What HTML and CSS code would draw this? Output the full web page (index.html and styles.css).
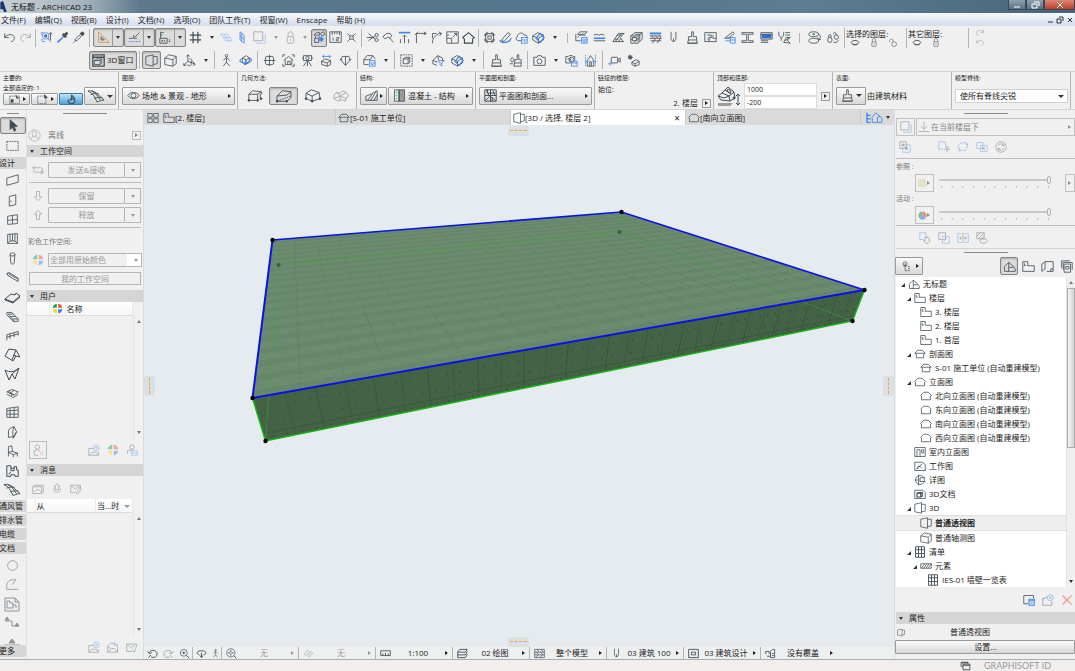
FILE: index.html
```html
<!DOCTYPE html>
<html lang="zh-CN">
<head>
    <meta charset="UTF-8">
    <meta name="viewport" content="width=device-width, initial-scale=1.0">
    <title>无标题 - ARCHICAD 23</title>
    <link rel="stylesheet" href="styles.css">
</head>
<body>
<svg class="sprite" aria-hidden="true">
    <!-- toolbar -->
    <symbol id="undo" viewBox="0 0 16 16"><path d="M2 3v5h5M2 8c3-5 12-5 12 1 0 2-2 4-4 4"/></symbol>
    <symbol id="redo" viewBox="0 0 16 16"><path d="M14 3v5H9M14 8C11 3 2 3 2 9c0 2 2 4 4 4"/></symbol>
    <symbol id="find" viewBox="0 0 16 16"><path class="b" d="M1 2h3M1 4h2M1 11h3M3 13h3"/><circle class="b" cx="7" cy="6" r="4"/><circle class="bf" cx="7" cy="6" r="2"/><path d="M10 9l3 4M13 2v9M11 4l2-2 2 2"/></symbol>
    <symbol id="pipette" viewBox="0 0 16 16"><path class="b" stroke-width="2" d="M2 14l6-6"/><path class="f" d="M8 6l2 2 1-1 1 1 1-1-1-1 2-2c1-2-1-3-2-2l-2 2-1-1-1 1 1 1z"/></symbol>
    <symbol id="inject" viewBox="0 0 16 16"><path class="b" d="M1 15l4-4"/><path d="M4 10l5-5 2 2-5 5H4z"/><path class="f" d="M10 3l3 3M10 3l3-2 2 2-2 3z"/></symbol>
    <symbol id="triangle" viewBox="0 0 16 16"><path class="o" d="M2 1v13h13z"/><path d="M5 7v4h4z"/></symbol>
    <symbol id="snap" viewBox="0 0 16 16"><path d="M1 9h5M8 8l6-6M7 5v4h4"/><path class="b" stroke-dasharray="2 1" d="M1 13h14"/></symbol>
    <symbol id="coord" viewBox="0 0 16 16"><path d="M2 1v8M2 2h4M2 5h2M1 9h9v6H1zM3 11l2 2M5 11l-2 2M7 11v2M12 11h2M12 13h2"/></symbol>
    <symbol id="hash" viewBox="0 0 16 16"><path stroke-width="1.5" d="M5 1v14M11 1v14M1 5h14M1 11h14"/></symbol>
    <symbol id="plane" viewBox="0 0 16 16"><path class="b" d="M1 4h8l6 8H7zM4 8h8M5 4l6 8"/></symbol>
    <symbol id="wallplane" viewBox="0 0 16 16"><path class="b" d="M5 1l5 4v10l-5-4zM5 6l5 4M7 3v10"/></symbol>
    <symbol id="layers" viewBox="0 0 16 16"><path d="M1 1h11v11H1z"/><path class="b" d="M4 15h11V4"/></symbol>
    <symbol id="lock" viewBox="0 0 16 16"><rect x="4" y="7" width="8" height="8" rx="2"/><path d="M5 7V4c0-4 6-4 6 0v3M8 10v2"/></symbol>
    <symbol id="suspend" viewBox="0 0 16 16"><path d="M1 5l3-3h4v3H1zM9 3l4-2 2 3-4 2zM2 9h5v5H2zM3 6v3M7 6l2 3"/><circle class="bf" cx="10" cy="10" r="2"/><path class="b" d="M10 6v8M6 10h8M7 7l6 6M13 7l-6 6"/></symbol>
    <symbol id="ruler" viewBox="0 0 16 16"><path d="M1 1h14v13H1zM4 1v4M7 1v3M10 1v3M13 1v4M5 8v4M9 8h3v2H9v2h3"/></symbol>
    <symbol id="cross" viewBox="0 0 16 16"><path d="M3 3l3 3M13 3l-3 3M3 13l3-3M13 13l-3-3M6 6h4v4H6z"/></symbol>
    <symbol id="trim" viewBox="0 0 16 16"><circle cx="13" cy="5" r="2"/><circle cx="13" cy="11" r="2"/><path d="M11 6L3 12M11 10L3 3M1 8h9"/></symbol>
    <symbol id="hammer" viewBox="0 0 16 16"><path d="M1 7l5-4h4l2 3-3 3-2-2-3 3zM9 8l5 6"/></symbol>
    <symbol id="align" viewBox="0 0 16 16"><path class="b" stroke-width="2" d="M1 2h14"/><path d="M8 5v10M6 7l2-2 2 2M3 10v5M13 10v5"/></symbol>
    <symbol id="corner" viewBox="0 0 16 16"><path d="M3 15V3h12M1 5l4-4M12 1l3 2-3 2"/></symbol>
    <symbol id="fillet" viewBox="0 0 16 16"><path d="M3 15C3 8 8 3 14 3M11 1l3 2-2 3M3 9V3h5"/></symbol>
    <symbol id="resize" viewBox="0 0 16 16"><path d="M1 1h14v14H1zM1 9h6v6M8 8l5-5M10 3h3v3M4 5H1"/></symbol>
    <symbol id="house" viewBox="0 0 16 16"><path stroke-width="1.4" d="M1 8l7-6 7 6-2 2v5H3v-5z"/></symbol>
    <symbol id="group" viewBox="0 0 16 16"><path d="M3 3h10v10H3zM6 6h4v4H6zM1 5h4V1M11 1v4h4M15 11h-4v4M5 15v-4H1"/></symbol>
    <symbol id="pencil" viewBox="0 0 16 16"><path class="b" stroke-width="1.5" d="M1 11c1 5 12 4 14-2"/><path d="M4 10l7-8 3 2-7 8-3 1z"/></symbol>
    <symbol id="cloud" viewBox="0 0 16 16"><path d="M8 12H4c-4-1-3-5-1-5 0-5 7-6 8-2 3-1 4 1 4 3"/><rect class="b" x="8" y="8" width="7" height="7"/><path class="b" d="M8 11h7M11 13h2"/></symbol>
    <symbol id="cube" viewBox="0 0 16 16"><path d="M1 6l6-4 7 3v6l-6 4-7-4zM1 6l7 3 6-4M8 9v6"/><path class="b" stroke-width="1.6" d="M5 9l5-6 5 5-5 6z"/></symbol>
    <symbol id="storyset" viewBox="0 0 16 16"><path d="M3 4l3-3h9l-3 3zM3 8l3-3h7M1 4v8h6"/><rect class="bl" x="8" y="8" width="7" height="7"/><path class="b" d="M8 8h7v7H8zM8 11h7M10 13h3"/></symbol>
    <symbol id="lines" viewBox="0 0 16 16"><path d="M1 5l3-1 3 1 3-1 4 1M1 12h14"/><path class="b" stroke-width="2" d="M1 9h14"/></symbol>
    <symbol id="hatch" viewBox="0 0 16 16"><path d="M1 13l7-10h7l-5 5 4 5zM4 13l8-10M8 13l3-4M3 10h5M6 5h6"/></symbol>
    <symbol id="block" viewBox="0 0 16 16"><path d="M1 6l5-4h9v8l-5 5H1zM1 6h9v8M10 6l5-4M3 8h5v4H3zM12 5v7M6 4h7M1 11l5-5M5 14l5-5"/></symbol>
    <symbol id="strata" viewBox="0 0 16 16"><path class="b" stroke-width="2.4" d="M1 3h14"/><path d="M1 6h14M1 9h14M2 12h13M3 6l3 3M8 6l3 3M13 6l2 3M4 15l4-6M10 15l4-6"/></symbol>
    <symbol id="modelfilter" viewBox="0 0 16 16"><path d="M1 2h14v12H1zM1 6h14M1 10h14M3 6l4 4M9 6l4 4M5 2l2 4M11 2l2 4M3 14l3-4M9 14l3-4"/></symbol>
    <symbol id="pen" viewBox="0 0 16 16"><path d="M5 1v8c0 5 6 5 6 0V1M8 9v4"/></symbol>
    <symbol id="brush" viewBox="0 0 16 16"><path d="M7 1h2v6h4v4H3V7h4zM3 11l-1 4h12l-1-4M2 15h12"/></symbol>
    <symbol id="profile" viewBox="0 0 16 16"><path d="M1 2h14v11H1zM4 5h5v3H6v5M11 5v4h4"/><path class="b" d="M4 10h4"/></symbol>
    <symbol id="edit" viewBox="0 0 16 16"><path class="b" d="M1 9h9M3 12h6"/><path d="M3 8l9-7 2 2-8 6z"/><path class="b" d="M9 8h6v7H9zM9 11h6"/></symbol>
    <symbol id="ibeam" viewBox="0 0 16 16"><path d="M1 2h14v2H9v8h6v2H1v-2h6V4H1z"/></symbol>
    <symbol id="sched" viewBox="0 0 16 16"><rect class="bf" x="2" y="4" width="12" height="5"/><path d="M1 2h14v8H1zM1 4h14M1 12h9M1 14h9"/></symbol>
    <symbol id="mep" viewBox="0 0 16 16"><path d="M1 1v4l3 4 3-4V1M4 9v3M9 2h6M9 5h6M7 14l3-6h5l-4 3 4 4zM9 12l5-4"/></symbol>
    <symbol id="eyeplus" viewBox="0 0 16 16"><ellipse cx="7" cy="4" rx="6" ry="3"/><ellipse cx="7" cy="12" rx="6" ry="3"/><circle cx="7" cy="4" r="1"/><path d="M12 3c4 2 4 5 1 8M12 8l1 3 3-1"/></symbol>
    <symbol id="locks" viewBox="0 0 16 16"><rect x="1" y="8" width="5" height="6" rx="2"/><path d="M2 8V6c0-2 3-2 3 0v2M8 4c0-3 3-3 3 0v1"/><rect x="9" y="5" width="5" height="5" rx="2"/><path d="M8 14h4l2-3"/></symbol>
    <symbol id="eye" viewBox="0 0 16 16"><path d="M1 8c3-5 11-5 14 0-3 5-11 5-14 0z"/><circle cx="8" cy="8" r="3"/></symbol>
    <symbol id="eyeshut" viewBox="0 0 16 16"><path stroke-width="1.6" d="M1 8c3-5 11-5 14 0-3 5-11 5-14 0z"/><path d="M3 11c3 2 7 2 10 0"/></symbol>
    <symbol id="unlock" viewBox="0 0 16 16"><rect x="6" y="7" width="8" height="8" rx="3"/><path d="M8 7V5c0-4-6-4-6 0v2"/></symbol>
    <!-- 3D toolbar -->
    <symbol id="win3d" viewBox="0 0 16 16"><path stroke-width="1.6" d="M1 1h14v14H1zM1 4h14"/><path d="M3 8l3-2h6l-2 2zM3 8v5h7V8M10 13l2-2V6"/></symbol>
    <symbol id="persp" viewBox="0 0 16 16"><path d="M1 3l9-2v14l-9-2zM10 3h5v9l-5 1"/></symbol>
    <symbol id="axo" viewBox="0 0 16 16"><path d="M1 5l5-4 9 2v9l-4 3-10-2zM1 5l10 2 4-4M11 7v8"/></symbol>
    <symbol id="axis" viewBox="0 0 16 16"><path d="M6 1v8l-5 5M6 9l8 3M4 3l2-2 2 2M1 11v3h3M8 6c4 0 4 4 1 4M5 13c3 3 6 1 5-3M12 9l3 4-3 1"/></symbol>
    <symbol id="walk" viewBox="0 0 16 16"><circle cx="8" cy="2" r="1.5"/><path d="M8 4v6l-4 5M8 10l4 5M4 8l4-4 4 4"/></symbol>
    <symbol id="orbit" viewBox="0 0 16 16"><path d="M4 5l5-3 4 3-1 6-5 2-3-3zM4 5l5 2 4-2M9 7l-2 6"/><path class="b" stroke-width="1.4" d="M3 6c-5 3 1 6 6 5s9-4 4-6M7 13l3-2-3-3"/></symbol>
    <symbol id="target" viewBox="0 0 16 16"><rect x="3" y="3" width="10" height="10" rx="2"/><path d="M8 1v14M1 8h14"/></symbol>
    <symbol id="homeview" viewBox="0 0 16 16"><path d="M1 4V1h3M12 1h3v3M1 12v3h3M12 15h3v-3M2 8l6-5 6 5M4 7v6h8V7M7 13v-4h3v4"/></symbol>
    <symbol id="tripod" viewBox="0 0 16 16"><circle cx="8" cy="5" r="2"/><path d="M3 2h10v6H3zM8 8v7M7 9l-4 6M9 9l4 6M1 5h2M13 5h2"/></symbol>
    <symbol id="cloudcube" viewBox="0 0 16 16"><path class="b" d="M3 3h10M5 1L3 3l2 2M11 5l2-2-2-2"/><path d="M2 9l4-3 7 2v5l-4 2-7-2zM2 9l7 2 4-3M9 11v4"/></symbol>
    <symbol id="look" viewBox="0 0 16 16"><path d="M1 7h3M12 7h3M4 3h8l2 4-6 7-6-7zM8 3v11"/></symbol>
    <symbol id="solid" viewBox="0 0 16 16"><path d="M1 7l4-5h7l3 4M1 7v6h6M1 7h8l3-5"/><path class="b" d="M8 8h7v7H8zM8 11h7M10 13h3"/></symbol>
    <symbol id="marqcube" viewBox="0 0 16 16"><path stroke-dasharray="2 1" d="M1 1h14v14H1z"/><path d="M4 6l3-2h5l-2 2zM4 6v6h6V6M10 12l2-2V4"/></symbol>
    <symbol id="filter" viewBox="0 0 16 16"><path d="M1 8l6-6 6 3v4M1 8v4l5 2M1 8l6 2M7 2l1 5"/><path class="b" d="M8 8h7l-3 3v4l-2-2v-2z"/></symbol>
    <symbol id="brushes" viewBox="0 0 16 16"><path d="M10 1h2v6h3v4H7V7h3zM7 11l-1 4h9v-4M2 8c0-2 2-4 2-4s2 2 2 4-4 2-4 0zM1 12h4"/></symbol>
    <symbol id="camera" viewBox="0 0 16 16"><path d="M1 4h4l1-2h4l1 2h4v10H1z"/><circle cx="8" cy="9" r="3"/></symbol>
    <symbol id="render" viewBox="0 0 16 16"><path d="M1 3h3l1-1h4l1 1h2v5M1 3v8h6M3 6h4v3"/><circle cx="8" cy="7" r="3"/><path class="b" d="M8 9h7v6H8zM8 11h7"/></symbol>
    <symbol id="sunhouse" viewBox="0 0 16 16"><path d="M4 8l4-6 4 6v7H4zM7 15v-5h2v5"/><path class="b" stroke-dasharray="2 1" d="M2 1v14M14 1v14M1 9h14"/></symbol>
    <symbol id="video" viewBox="0 0 16 16"><rect x="4" y="4" width="8" height="7" rx="1"/><path d="M12 7l3-2v5l-3-2z"/><path class="b" d="M1 12h5M3 10l-2 2 2 2"/></symbol>
    <symbol id="gears" viewBox="0 0 16 16"><circle cx="4" cy="4" r="2"/><path d="M4 1v6M1 4h6M2 2l4 4M6 2L2 6M6 10l5-3 4 2v4l-5 2-4-2zM6 10l4 2 5-3M10 12v3"/></symbol>
    <!-- info box -->
    <symbol id="mesh" viewBox="0 0 20 14"><path d="M1 1c4-1 6 0 9 2l9 8c-4 0-6 2-8 2C9 7 6 3 1 1zM5 1c5 2 7 6 10 10M4 5c4-2 7-1 9-1M8 9c3-1 6-1 9-1"/></symbol>
    <symbol id="selbox" viewBox="0 0 16 16"><path stroke-dasharray="2 1" d="M1 3h14v11H1z"/><path class="f" d="M10 2l4 4-3 0zM3 8h3v4H3z"/></symbol>
    <symbol id="selpick" viewBox="0 0 16 16"><path stroke-dasharray="2 1" d="M1 3h12v11H1z"/><path class="f" d="M11 1l4 4-4 1z"/></symbol>
    <symbol id="magnet" viewBox="0 0 16 16"><path stroke-width="1.6" d="M3 8c0 8 10 8 10 1L9 6 5 9M8 1v8M9 2l4 5"/></symbol>
    <symbol id="geo1" viewBox="0 0 20 16"><path d="M3 6l4-4 10 1 1 2-2 1v6M3 6h10v7H3zM13 6l4-3"/><circle class="f" cx="3" cy="13" r="1"/><circle class="f" cx="13" cy="13" r="1"/><circle class="f" cx="17" cy="11" r="1"/></symbol>
    <symbol id="geo2" viewBox="0 0 20 16"><path d="M2 8l6-6 10 1v7l-5 4H2zM2 8l11-1 5-4"/><path stroke-dasharray="2 1" d="M2 14L18 8"/><circle class="f" cx="2" cy="14" r="1"/><circle class="f" cx="13" cy="14" r="1"/></symbol>
    <symbol id="geo3" viewBox="0 0 20 16"><path d="M2 5l6-4 9 3 1 7-9 3-7-3zM2 5l7 3 8-4M9 8v6"/><circle class="f" cx="2" cy="11" r="1"/><circle class="f" cx="9" cy="14" r="1"/><circle class="f" cx="18" cy="11" r="1"/></symbol>
    <symbol id="geo4" viewBox="0 0 20 16"><path d="M2 7l3-3 4 1 3-3 4 2 3 4-3 2-1 4-4-2-4 2-5-3zM5 4l4 4 7-4M2 11l7-3 7 3M9 8v6"/></symbol>
    <symbol id="slope" viewBox="0 0 16 16"><path d="M1 14V9l7-3 7-4v12zM3 14l6-8M7 14l6-10M11 14l4-7"/></symbol>
    <symbol id="fills" viewBox="0 0 14 16"><rect class="w" x="1" y="1" width="5" height="14"/><path class="g" stroke-dasharray="1 1" d="M3 1v14M5 2v12M1 4h4M1 8h4M1 12h4"/><rect class="gr" x="7" y="1" width="6" height="14"/></symbol>
    <symbol id="plan" viewBox="0 0 16 16"><path stroke-width="1.2" d="M1 1h14v14H1zM1 8h14M8 1v14M3 1l3 7M11 2l2 5M2 14l5-5M9 10l5 4M4 1v4h10M10 15v-5"/></symbol>
    <symbol id="top" viewBox="0 0 24 20"><path d="M1 10l4-3 6-6 6 5 1 6-5 3-9-1zM5 7l7 3 5-4M12 10l1 5M1 10l6 2 5-2M8 4l6 4M10 5l1-2 3 2-1 2z"/><path class="gr" stroke="none" d="M1 17h15l-3 3H1z"/><path d="M21 8v11M19 10l2-2 2 2M19 17l2 2 2-2"/><circle class="f" cx="17" cy="12" r="1"/></symbol>
    <!-- toolbox -->
    <symbol id="arrow" viewBox="0 0 16 16"><path class="f" d="M5 1v12l3-3 2 5 2-1-2-5h4z"/></symbol>
    <symbol id="marquee" viewBox="0 0 16 16"><path stroke-dasharray="2 1" d="M1 3h14v11H1z"/></symbol>
    <symbol id="wall" viewBox="0 0 16 16"><path d="M1 5l14-4v9L1 14z"/></symbol>
    <symbol id="door" viewBox="0 0 16 16"><path d="M4 3l8-2v12l-8 2zM6 8v2"/></symbol>
    <symbol id="window" viewBox="0 0 16 16"><path d="M2 4l12-2v11L2 14zM8 3v10M2 9l12-1"/></symbol>
    <symbol id="curtainwin" viewBox="0 0 16 16"><path d="M2 3l12-1v12H2zM5 3v8h6V2M8 3v8M2 14l3-3M14 14l-3-3"/></symbol>
    <symbol id="column" viewBox="0 0 16 16"><ellipse cx="8" cy="3" rx="3" ry="2"/><path d="M5 3l1 11c1 1 3 1 4 0l1-11"/></symbol>
    <symbol id="beam" viewBox="0 0 16 16"><path d="M1 3l3-1 11 7v4L3 6zM1 3l2 3M4 2v2l11 6"/></symbol>
    <symbol id="slab" viewBox="0 0 16 16"><path d="M1 10l6-5 4 1 1-2 4 3-7 6zM1 10v1l8 3 7-6"/></symbol>
    <symbol id="stair" viewBox="0 0 16 16"><path d="M1 3h6l2 2H3M3 5l2 3h7L9 5M5 8l3 3h7l-3-3M8 11l2 3h5v-3M1 3v3l9 9"/></symbol>
    <symbol id="rail" viewBox="0 0 16 16"><path d="M1 7l14-4v5M1 7v7M5 6v6M10 5v5M1 10l14-4"/></symbol>
    <symbol id="roof" viewBox="0 0 16 16"><path d="M1 9l4-7 7 1 4 7-4-1-3 5zM12 3l-4 10M9 8l3 1"/></symbol>
    <symbol id="shell" viewBox="0 0 16 16"><path d="M1 4c5 3 9 2 14-2l-4 11-3-5-3 6zM8 8l7-6"/></symbol>
    <symbol id="skylight" viewBox="0 0 16 16"><path d="M1 6l6-3 8 3-5 4zM1 9l8 4 6-4M3 5l7 5M7 8v3M4 8l6-4"/></symbol>
    <symbol id="cwall" viewBox="0 0 16 16"><path d="M1 3l14-2v13H1zM5 3v11M10 2v12M1 6l14-1M1 10h14"/></symbol>
    <symbol id="morph" viewBox="0 0 16 16"><path d="M3 6c1-4 6-5 7-5l3 6-3 6-7 1zM10 1c-2 3-2 8-1 14M9 15l4-8"/></symbol>
    <symbol id="chair" viewBox="0 0 16 16"><path d="M3 2l4-1 1 7 6 2-5 2-6-3zM3 9v5M9 12v3M14 10v4M8 8l-5 1"/></symbol>
    <symbol id="zone" viewBox="0 0 16 16"><path stroke-width="1.2" d="M1 1h5v3h4V2h3v4h2v8h-4v-2H6v2H1zM6 4v3h4V4M3 11l3-2"/></symbol>
    <symbol id="circle" viewBox="0 0 16 16"><circle cx="8" cy="8" r="6"/></symbol>
    <symbol id="polyline" viewBox="0 0 16 16"><path d="M15 14H1V8c1-5 5-6 11-6l-4 6"/></symbol>
    <symbol id="drawing" viewBox="0 0 16 16"><path d="M1 2h10l4 4v9H1zM11 2v4h4M3 5h3v2h3v5H3zM9 9h3v3"/></symbol>
    <symbol id="section" viewBox="0 0 16 16"><path d="M1 6h7v5h7"/><path class="f" d="M1 5l2-3 2 3zM11 11l2-3 2 3z"/></symbol>
    <symbol id="elev" viewBox="0 0 16 16"><path d="M0 11h16"/><path class="f" d="M5 9l3-4 3 4z"/></symbol>
    <!-- teamwork -->
    <symbol id="user" viewBox="0 0 16 16"><circle cx="8" cy="8" r="7"/><circle cx="8" cy="6" r="3"/><path d="M3 13c1-5 9-5 10 0"/></symbol>
    <symbol id="sync" viewBox="0 0 16 16"><path d="M4 2L1 5l3 3M1 5h10c5 0 5 6 0 6M12 8l3 3-3 3M15 11H5c-3 0-4-2-3-3"/></symbol>
    <symbol id="down" viewBox="0 0 16 16"><path d="M6 2h4v7h3l-5 5-5-5h3z"/></symbol>
    <symbol id="up" viewBox="0 0 16 16"><path d="M6 14h4V7h3L8 2 3 7h3z"/></symbol>
    <symbol id="wheel" viewBox="0 0 16 16"><g stroke="none"><path fill="#18a64a" d="M7 1v6H1a7 7 0 0 1 6-6z"/><path fill="#f4511e" d="M9 1v6h6a7 7 0 0 0-6-6z"/><path fill="#fbd51b" d="M7 15V9H1a7 7 0 0 0 6 6z"/><path fill="#2f7df6" d="M9 15V9h6a7 7 0 0 1-6 6z"/></g></symbol>
    <symbol id="userx" viewBox="0 0 16 16"><circle cx="7" cy="4" r="3"/><path d="M3 15V9l3-1h3l1 2M3 15h5"/><path class="r" d="M10 10l5 5M15 10l-5 5"/></symbol>
    <symbol id="mailplus" viewBox="0 0 16 16"><path d="M1 6h6M1 6v9h13v-4M1 15l4-4h6l3 4"/><circle class="b" cx="11" cy="5" r="4"/><path class="b" d="M11 3v4M9 5h4"/></symbol>
    <symbol id="userlist" viewBox="0 0 16 16"><circle cx="8" cy="4" r="3"/><path d="M2 13V9l4-1h4"/><path class="b" d="M7 9h8v6H7zM7 12h8"/></symbol>
    <symbol id="mail" viewBox="0 0 16 16"><path d="M1 5l2-2h12v9l-2 2H1zM1 5h12v9M3 12l3-3h3l3 3"/></symbol>
    <symbol id="mailup" viewBox="0 0 16 16"><path d="M4 7c-3 7 11 7 8 0M6 9V5H4l4-4 4 4h-2v4z"/></symbol>
    <symbol id="mailedit" viewBox="0 0 16 16"><path d="M1 3h13v4M1 3v10h6M1 3l6 5 6-4M8 13l5-7 2 2-5 7z"/></symbol>
    <symbol id="mailopen" viewBox="0 0 16 16"><path d="M1 7l4-4h6l3 4v8H1zM1 15l5-5h4l4 5M1 7l4 3"/><path class="b" d="M9 5h6M11 3L9 5l2 2"/></symbol>
    <symbol id="mailok" viewBox="0 0 16 16"><path d="M1 4h13M1 4v10h7M1 4l6 5 5-4"/><path class="g" stroke-width="1.5" d="M8 11l3 4 4-11"/></symbol>
    <!-- view tabs and navigator -->
    <symbol id="tiles" viewBox="0 0 16 16"><path d="M1 2h6v5H1zM9 2h6v5H9zM1 9h6v5H1zM9 9h6v5H9z"/></symbol>
    <symbol id="story" viewBox="0 0 16 16"><path d="M1 2h6v5h8v7H1zM3 4v3h2"/></symbol>
    <symbol id="sec" viewBox="0 0 16 16"><path d="M1 7l4-4h6l4 4M1 7h14M3 7v6h10V7"/></symbol>
    <symbol id="elevation" viewBox="0 0 16 16"><path d="M1 7l4-4h6l4 4-1 1v5H2V8z"/></symbol>
    <symbol id="project" viewBox="0 0 16 16"><path d="M1 9l6-6 5 4 3 4v3H2V9M7 3v6h6M7 14V9"/></symbol>
    <symbol id="navtree" viewBox="0 0 20 16"><path class="b" stroke-width="1.5" d="M2 2v11M2 5h4M2 9h4M2 13h4"/><path class="b" d="M7 8l5-6 7 6v5H8V8M14 13V7l3-1"/></symbol>
    <symbol id="interior" viewBox="0 0 16 16"><path d="M1 2h14v12H1zM4 14V5h4v9M10 5h3v4h-3z"/></symbol>
    <symbol id="worksheet" viewBox="0 0 16 16"><path d="M1 3h10l4 3v8H1zM3 12l8-7M4 12l2-4 4 2"/></symbol>
    <symbol id="detail" viewBox="0 0 16 16"><circle cx="8" cy="8" r="6"/><path d="M6 1v14M8 5h7M8 10h7M1 8h5M8 5v6"/></symbol>
    <symbol id="doc3d" viewBox="0 0 16 16"><path d="M1 3h11l3 3v8H1z"/><path stroke-width="1.5" d="M4 7l2-1h5v5l-2 1H4zM4 7h5v5M9 7l2-1"/></symbol>
    <symbol id="grid" viewBox="0 0 16 16"><path stroke-width="1.2" d="M2 1h12v14H2zM6 1v14M10 1v14M2 5h12M2 10h12"/></symbol>
    <symbol id="element" viewBox="0 0 16 16"><path d="M1 5h14v6H1zM2 11l4-6M5 11l4-6M8 11l4-6M11 11l4-6"/></symbol>
    <symbol id="viewmap" viewBox="0 0 16 16"><path d="M1 5l4-3v9l-4 3zM5 2h10v12H7M12 14v-3h3"/></symbol>
    <symbol id="layout" viewBox="0 0 16 16"><path d="M5 5h8v10H5zM4 12V3h11v9M2 10V1h10M7 8h4v3H7z"/></symbol>
    <symbol id="chooser" viewBox="0 0 16 16"><circle cx="6" cy="4" r="3"/><path d="M3 7h6M6 3v11h3M10 8h3M10 11h3M10 14h3"/></symbol>
    <symbol id="swap" viewBox="0 0 16 16"><path class="b" d="M5 5h10v10H5z"/><path d="M1 1h9v9H1zM4 4l7 7M4 7V4h3M11 8v3H8"/></symbol>
    <symbol id="moveref" viewBox="0 0 16 16"><path class="b" d="M10 7V1H1v10h6"/><path d="M12 7v8M8 11h8M10 9l2-2 2 2"/></symbol>
    <symbol id="rotref" viewBox="0 0 16 16"><path class="b" d="M4 3l7-1 3 5-3 6-7-1-3-5z"/><path d="M12 2l3 4M4 14l-2-4"/></symbol>
    <symbol id="refset" viewBox="0 0 16 16"><path class="b" d="M1 2h8v8H1zM6 6h9v8H6z"/><path d="M9 9l3 3M9 12V9h3"/></symbol>
    <symbol id="refresh" viewBox="0 0 16 16"><circle cx="8" cy="8" r="7"/><path d="M4 7c1-4 6-4 8-1M12 3v3H9M12 9c-1 4-6 4-8 1M4 13v-3h3"/></symbol>
    <symbol id="ontop" viewBox="0 0 16 16"><path d="M8 1v10M4 7l4 4 4-4M1 14h14"/></symbol>
    <symbol id="rgb" viewBox="0 0 16 16"><g stroke="none"><path fill="#e58a78" d="M8 8V1a7 7 0 0 1 6 11z"/><path fill="#7aa6e4" d="M8 8l6 4a7 7 0 0 1-12 0z"/><path fill="#72b98a" d="M8 8l-6 4A7 7 0 0 1 8 1z"/></g></symbol>
    <symbol id="hand" viewBox="0 0 16 16"><path class="b" d="M9 5V1H1v9h4"/><path d="M6 10l2 2V7l1-1 1 2V6l2 1v1l2 1v4l-2 2h-3l-3-4"/></symbol>
    <symbol id="overlap" viewBox="0 0 16 16"><path d="M1 1h9v9H1z"/><path class="b" d="M6 6h9v9H6zM8 12l4-4"/></symbol>
    <symbol id="splitref" viewBox="0 0 16 16"><path class="b" d="M6 2H1v12h5M10 2h5v12h-5"/><path d="M8 1v14M3 8h3M10 8h3M5 6v4M11 6v4"/></symbol>
    <symbol id="maskref" viewBox="0 0 16 16"><path d="M1 1h10v8H1zM1 6l5-5M3 9l8-8M7 9l4-4"/><ellipse cx="10" cy="12" rx="5" ry="3"/></symbol>
    <symbol id="viewset" viewBox="0 0 16 16"><path d="M7 13H1V2h13v4"/><path class="b" stroke-width="1.4" d="M8 7h7v8H8zM8 9h7M10 12h3"/></symbol>
    <symbol id="viewnew" viewBox="0 0 16 16"><path d="M7 4H5L4 6H1v9h12v-5"/><circle class="b" cx="11" cy="5" r="4"/><path class="b" d="M11 3v4M9 5h4"/></symbol>
    <symbol id="delete" viewBox="0 0 16 16"><path class="r" stroke-width="2" d="M2 2l12 12M14 2L2 14"/></symbol>
    <!-- bottom bar -->
    <symbol id="zback" viewBox="0 0 16 16"><path stroke-width="1.3" d="M3 7a6 5 0 1 1 3 6M1 5l2 3 4-1M6 10l-4 4"/></symbol>
    <symbol id="zfwd" viewBox="0 0 16 16"><path stroke-width="1.3" d="M13 7a6 5 0 1 0-3 6M15 5l-2 3-4-1M10 10l4 4"/></symbol>
    <symbol id="zin" viewBox="0 0 16 16"><circle cx="7" cy="7" r="5"/><path stroke-width="1.3" d="M11 11l4 4M7 5v4M5 7h4"/></symbol>
    <symbol id="zorb" viewBox="0 0 16 16"><path stroke-width="1.3" d="M5 10C0 9 0 4 8 4s8 5 3 6M8 7v7M6 11l2 3 2-3"/></symbol>
    <symbol id="zfit" viewBox="0 0 16 16"><circle cx="7" cy="7" r="6"/><path stroke-width="1.3" d="M11 11l4 4M7 3v3M7 8v3M3 7h3M8 7h3"/></symbol>
    <symbol id="pan" viewBox="0 0 16 16"><path d="M2 8l5-5 2 3-5 5zM8 10l4-5 2 3-5 5z"/></symbol>
    <symbol id="scale" viewBox="0 0 16 16"><path stroke-width="1.2" d="M1 4h14v7H1zM4 11V8M8 11V7M12 11V8"/></symbol>
    <symbol id="laycomb" viewBox="0 0 16 16"><path stroke-width="1.3" d="M1 6l3-4h11l-3 4zM1 10h11l3-5M1 14h11l3-5M1 6v8"/></symbol>
    <symbol id="override" viewBox="0 0 16 16"><path stroke-width="1.2" d="M1 9V5h5v4M8 14V5l3-3h3v12zM10 8h3M10 11h3M3 12h5"/></symbol>
    <symbol id="frame" viewBox="0 0 16 16"><path stroke-width="1.3" d="M1 2h14v12H1zM5 6h6v4H5z"/></symbol>
    <symbol id="windows" viewBox="0 0 16 16"><path stroke-width="1.4" d="M3 9H1V2h11v2M4 5h11v9H4zM1 3h11M4 7h11"/></symbol>
</svg>

<div class="app">
    <header class="titlebar">
        <svg class="logo" viewBox="0 0 8 12"><path fill="#17386b" stroke="none" d="M0 1l3-1 4 12H4L3 9H0z"/></svg>
        <h1>无标题 - ARCHICAD 23</h1>
        <div class="wincontrols">
            <button aria-label="最小化"><svg class="wi" viewBox="0 0 10 8"><path d="M2 6h6"/></svg></button>
            <button aria-label="还原"><svg class="wi" viewBox="0 0 10 8"><path d="M2 3h5v4H2zM4 1h5v4"/></svg></button>
            <button class="close" aria-label="关闭"><svg class="wi" viewBox="0 0 10 8"><path d="M2 1l6 6M8 1L2 7"/></svg></button>
        </div>
    </header>

    <nav class="menubar">
        <a href="#">文件(F)</a><a href="#">编辑(Q)</a><a href="#">视图(B)</a><a href="#">设计(I)</a><a href="#">文档(N)</a><a href="#">选项(O)</a><a href="#">团队工作(T)</a><a href="#">视窗(W)</a><a href="#">Enscape</a><a href="#">帮助 (H)</a>
        <span class="mdi">
            <button aria-label="最小化窗口"><svg class="wi" viewBox="0 0 10 8"><path d="M3 6h5"/></svg></button>
            <button aria-label="还原窗口"><svg class="wi" viewBox="0 0 10 8"><path d="M2 3h4v4H2zM4 1h4v4"/></svg></button>
            <button aria-label="关闭窗口"><svg class="wi" viewBox="0 0 10 8"><path d="M3 2l4 4M7 2L3 6"/></svg></button>
        </span>
    </nav>

    <div class="toolbar">
        <button class="tool" aria-label="撤销"><svg><use href="#undo"/></svg></button>
        <button class="tool dim" aria-label="重做"><svg><use href="#redo"/></svg></button>
        <i class="sep"></i>
        <button class="tool" aria-label="查找选择"><svg><use href="#find"/></svg></button>
        <button class="tool" aria-label="拾取参数"><svg><use href="#pipette"/></svg></button>
        <button class="tool" aria-label="注入参数"><svg><use href="#inject"/></svg></button>
        <i class="sep wide"></i>
        <span class="split on"><button class="tool" aria-label="辅助线"><svg><use href="#triangle"/></svg></button><button class="drop" aria-label="辅助线选项"></button></span>
        <span class="split on"><button class="tool" aria-label="捕捉"><svg><use href="#snap"/></svg></button><button class="drop" aria-label="捕捉选项"></button></span>
        <span class="split on"><button class="tool" aria-label="坐标"><svg><use href="#coord"/></svg></button><button class="drop" aria-label="坐标选项"></button></span>
        <button class="tool wide" aria-label="网格"><svg><use href="#hash"/></svg></button>
        <button class="drop" aria-label="网格选项"></button>
        <button class="tool dim" aria-label="编辑平面"><svg><use href="#plane"/></svg></button>
        <button class="tool" aria-label="垂直平面"><svg><use href="#wallplane"/></svg></button>
        <button class="tool wide dim" aria-label="描绘"><svg><use href="#layers"/></svg></button>
        <button class="drop dim" aria-label="描绘选项"></button>
        <button class="tool dim" aria-label="锁定"><svg><use href="#lock"/></svg></button>
        <button class="drop dim" aria-label="锁定选项"></button>
        <button class="tool on" aria-label="暂停编组"><svg><use href="#suspend"/></svg></button>
        <button class="tool" aria-label="测量"><svg><use href="#ruler"/></svg></button>
        <button class="tool" aria-label="交叉"><svg><use href="#cross"/></svg></button>
        <i class="sep"></i>
        <button class="tool" aria-label="修剪"><svg><use href="#trim"/></svg></button>
        <button class="tool" aria-label="分割"><svg><use href="#hammer"/></svg></button>
        <button class="tool" aria-label="调整"><svg><use href="#align"/></svg></button>
        <button class="tool" aria-label="相交"><svg><use href="#corner"/></svg></button>
        <button class="tool" aria-label="圆角"><svg><use href="#fillet"/></svg></button>
        <button class="tool" aria-label="调整大小"><svg><use href="#resize"/></svg></button>
        <button class="tool" aria-label="房屋"><svg><use href="#house"/></svg></button>
        <i class="sep"></i>
        <button class="tool" aria-label="编组"><svg><use href="#group"/></svg></button>
        <button class="tool" aria-label="编辑"><svg><use href="#pencil"/></svg></button>
        <button class="tool" aria-label="收藏夹"><svg><use href="#cloud"/></svg></button>
        <button class="tool wide" aria-label="变形体"><svg><use href="#cube"/></svg></button>
        <button class="drop" aria-label="变形体选项"></button>
        <i class="sep loose"></i>
        <div class="settings">
            <button class="tool" aria-label="楼层设置"><svg><use href="#storyset"/></svg></button>
            <button class="tool" aria-label="线型"><svg><use href="#lines"/></svg></button>
            <button class="tool" aria-label="填充"><svg><use href="#hatch"/></svg></button>
            <button class="tool" aria-label="建筑材料"><svg><use href="#block"/></svg></button>
            <button class="tool" aria-label="复合结构"><svg><use href="#strata"/></svg></button>
            <button class="tool" aria-label="画笔"><svg><use href="#pen"/></svg></button>
            <button class="tool" aria-label="表面"><svg><use href="#brush"/></svg></button>
            <button class="tool" aria-label="截面"><svg><use href="#profile"/></svg></button>
            <button class="tool" aria-label="编辑截面"><svg><use href="#edit"/></svg></button>
            <button class="tool" aria-label="型材"><svg><use href="#ibeam"/></svg></button>
            <button class="tool" aria-label="清单"><svg><use href="#sched"/></svg></button>
            <button class="tool" aria-label="画笔集"><svg><use href="#mep"/></svg></button>
        </div>
        <i class="sep loose"></i>
        <button class="tool wide" aria-label="图层可见"><svg><use href="#eyeplus"/></svg></button>
        <button class="tool wide" aria-label="图层锁定"><svg><use href="#locks"/></svg></button>
        <i class="sep tall"></i>
        <div class="layerset">
            <span>选择的图层:</span>
            <div><button class="mini" aria-label="隐藏"><svg><use href="#eyeshut"/></svg></button><button class="mini" aria-label="锁定图层"><svg><use href="#lock"/></svg></button><button class="mini" aria-label="解锁图层"><svg><use href="#unlock"/></svg></button></div>
        </div>
        <i class="sep tall"></i>
        <div class="layerset">
            <span>其它图层:</span>
            <div><button class="mini" aria-label="隐藏其它"><svg><use href="#eyeshut"/></svg></button><button class="mini" aria-label="锁定其它"><svg><use href="#lock"/></svg></button></div>
        </div>
        <i class="sep tall"></i>
        <div class="history dim">
            <button class="mini" aria-label="重做图层"><svg><use href="#redo"/></svg></button>
            <button class="mini" aria-label="撤销图层"><svg><use href="#undo"/></svg></button>
        </div>
    </div>

    <div class="toolbar view3d">
        <button class="on window3d"><svg><use href="#win3d"/></svg>3D窗口</button>
        <i class="sep"></i>
        <button class="tool wide on" aria-label="透视"><svg><use href="#persp"/></svg></button>
        <button class="tool wide" aria-label="轴测"><svg><use href="#axo"/></svg></button>
        <button class="tool wide" aria-label="坐标轴"><svg><use href="#axis"/></svg></button>
        <button class="drop" aria-label="坐标轴选项"></button>
        <i class="sep"></i>
        <button class="tool wide" aria-label="漫游"><svg><use href="#walk"/></svg></button>
        <button class="tool wide" aria-label="环绕"><svg><use href="#orbit"/></svg></button>
        <i class="sep"></i>
        <button class="tool wide" aria-label="目标"><svg><use href="#target"/></svg></button>
        <button class="tool wide" aria-label="主视图"><svg><use href="#homeview"/></svg></button>
        <button class="tool wide" aria-label="视点"><svg><use href="#tripod"/></svg></button>
        <button class="tool wide" aria-label="视图历史"><svg><use href="#cloudcube"/></svg></button>
        <button class="tool wide" aria-label="垂直观察"><svg><use href="#look"/></svg></button>
        <i class="sep"></i>
        <button class="tool wide" aria-label="3D样式"><svg><use href="#solid"/></svg></button>
        <button class="drop" aria-label="3D样式选项"></button>
        <i class="sep"></i>
        <button class="tool wide" aria-label="选取框"><svg><use href="#marqcube"/></svg></button>
        <button class="drop" aria-label="选取框选项"></button>
        <button class="tool wide" aria-label="过滤"><svg><use href="#filter"/></svg></button>
        <button class="tool wide" aria-label="剖切"><svg><use href="#cube"/></svg></button>
        <button class="drop" aria-label="剖切选项"></button>
        <i class="sep wide"></i>
        <button class="tool wide" aria-label="表面涂刷"><svg><use href="#brush"/></svg></button>
        <button class="tool wide" aria-label="恢复表面"><svg><use href="#brushes"/></svg></button>
        <i class="sep"></i>
        <button class="tool wide" aria-label="照片渲染"><svg><use href="#camera"/></svg></button>
        <button class="drop" aria-label="渲染选项"></button>
        <button class="tool wide" aria-label="渲染设置"><svg><use href="#render"/></svg></button>
        <button class="tool wide" aria-label="太阳"><svg><use href="#sunhouse"/></svg></button>
        <i class="sep"></i>
        <button class="tool wide" aria-label="飞行动画"><svg><use href="#video"/></svg></button>
        <button class="tool wide" aria-label="动画设置"><svg><use href="#gears"/></svg></button>
    </div>

    <section class="infobox">
        <div class="cell">
            <h2>主要的:</h2>
            <h2>全部选定的: 1</h2>
            <div class="row main-row">
                <button class="raised" aria-label="选择"><svg><use href="#selbox"/></svg><i class="tr"></i></button>
                <button class="raised" aria-label="选取"><svg><use href="#selpick"/></svg><i class="tr"></i></button>
                <button class="raised active" aria-label="吸附"><svg><use href="#magnet"/></svg></button>
                <button class="raised big" aria-label="网面"><svg class="w20"><use href="#mesh"/></svg><i class="td"></i></button>
            </div>
        </div>
        <div class="cell">
            <h2>图层:</h2>
            <div class="row"><button class="raised big grow"><svg><use href="#eye"/></svg><span>场地 &amp; 景观 - 地形</span><i class="tr"></i></button></div>
        </div>
        <div class="cell">
            <h2>几何方法:</h2>
            <div class="row methods">
                <button aria-label="多边形"><svg class="w20"><use href="#geo1"/></svg></button>
                <button class="on" aria-label="规则倾斜"><svg class="w20"><use href="#geo2"/></svg></button>
                <button aria-label="矩形"><svg class="w20"><use href="#geo3"/></svg></button>
                <button class="dim" aria-label="旋转矩形"><svg class="w20"><use href="#geo4"/></svg></button>
            </div>
        </div>
        <div class="cell">
            <h2>结构:</h2>
            <div class="row">
                <button class="raised big" aria-label="网面结构"><svg><use href="#slope"/></svg><i class="tr"></i></button>
                <button class="raised big grow"><svg><use href="#fills"/></svg><span>混凝土 - 结构</span><i class="tr"></i></button>
            </div>
        </div>
        <div class="cell">
            <h2>平面图和剖面:</h2>
            <div class="row"><button class="raised big grow"><svg><use href="#plan"/></svg><span>平面图和剖面...</span><i class="tr"></i></button></div>
        </div>
        <div class="cell">
            <h2>链接的楼层:</h2>
            <p class="home">始位:</p>
            <p class="story">2. 楼层 <button class="tiny" aria-label="选择楼层"><i class="tr"></i></button></p>
        </div>
        <div class="cell">
            <h2>顶部和底部:</h2>
            <div class="row">
                <svg class="w24"><use href="#top"/></svg>
                <div class="fields"><input type="text" value="1000" aria-label="顶部"><input type="text" value="-200" aria-label="底部"></div>
                <button class="tiny" aria-label="高程"><i class="tr"></i></button>
            </div>
        </div>
        <div class="cell">
            <h2>表面:</h2>
            <div class="row"><button class="raised big" aria-label="覆盖表面"><svg><use href="#brush"/></svg><i class="td"></i></button><span>由建筑材料</span></div>
        </div>
        <div class="cell">
            <h2>模型脊线:</h2>
            <div class="row"><span class="combo"><select aria-label="模型脊线"><option>使所有脊线尖锐</option></select></span></div>
        </div>
        <div class="cell"></div>
    </section>

    <main class="workspace">
        <aside class="toolbox">
            <i class="grip"></i>
            <button class="on pointer" aria-label="箭头"><svg><use href="#arrow"/></svg></button>
            <button class="marq" aria-label="选取框"><svg><use href="#marquee"/></svg></button>
            <h3>设计</h3>
            <div class="design">
                <button aria-label="墙"><svg><use href="#wall"/></svg></button>
                <button aria-label="门"><svg><use href="#door"/></svg></button>
                <button aria-label="窗"><svg><use href="#window"/></svg></button>
                <button aria-label="角窗"><svg><use href="#curtainwin"/></svg></button>
                <button aria-label="柱"><svg><use href="#column"/></svg></button>
                <button aria-label="梁"><svg><use href="#beam"/></svg></button>
                <button aria-label="板"><svg class="w18"><use href="#slab"/></svg></button>
                <button aria-label="楼梯"><svg><use href="#stair"/></svg></button>
                <button aria-label="栏杆"><svg><use href="#rail"/></svg></button>
                <button aria-label="屋顶"><svg class="w18"><use href="#roof"/></svg></button>
                <button aria-label="壳体"><svg class="w18"><use href="#shell"/></svg></button>
                <button aria-label="天窗"><svg><use href="#skylight"/></svg></button>
                <button aria-label="幕墙"><svg><use href="#cwall"/></svg></button>
                <button aria-label="变形体"><svg><use href="#morph"/></svg></button>
                <button aria-label="对象"><svg><use href="#chair"/></svg></button>
                <button aria-label="区域"><svg><use href="#zone"/></svg></button>
                <button aria-label="网面"><svg class="w20"><use href="#mesh"/></svg></button>
            </div>
            <h3>通风管</h3>
            <h3>排水管</h3>
            <h3>电缆</h3>
            <h3>文档</h3>
            <div class="document">
                <button aria-label="圆"><svg><use href="#circle"/></svg></button>
                <button aria-label="多义线"><svg><use href="#polyline"/></svg></button>
                <button aria-label="图形"><svg class="w18"><use href="#drawing"/></svg></button>
                <button aria-label="剖面"><svg class="w18"><use href="#section"/></svg></button>
                <button aria-label="立面"><svg class="w18"><use href="#elev"/></svg></button>
            </div>
            <h3>更多</h3>
        </aside>

        <aside class="teamwork">
            <i class="grip"></i>
            <div class="status"><svg><use href="#user"/></svg><span>离线</span><button class="tiny" aria-label="团队工作菜单"><i class="tr"></i></button></div>
            <h3><i class="td"></i>工作空间</h3>
            <div class="action"><svg><use href="#sync"/></svg><button disabled>发送&amp;接收</button><button class="more" disabled aria-label="发送选项"></button></div>
            <hr>
            <div class="action"><svg><use href="#down"/></svg><button disabled>保留</button><button class="more" disabled aria-label="保留选项"></button></div>
            <div class="action"><svg><use href="#up"/></svg><button disabled>释放</button><button class="more" disabled aria-label="释放选项"></button></div>
            <hr>
            <label class="caption" for="colors">彩色工作空间:</label>
            <div class="action colors"><svg><use href="#wheel"/></svg><span class="combo"><select id="colors" disabled><option>全部用原始颜色</option></select></span></div>
            <button class="mine" disabled>我的工作空间</button>
            <h3><i class="td"></i>用户</h3>
            <div class="list users">
                <table><thead><tr><th class="c0"></th><th class="c1"><svg><use href="#wheel"/></svg></th><th>名称</th></tr></thead></table>
                <div class="scroll"><i class="tu"></i><i class="td"></i></div>
            </div>
            <div class="footer first">
                <button class="boxed" disabled aria-label="移除用户"><svg><use href="#userx"/></svg></button>
                <button disabled aria-label="新消息"><svg><use href="#mailplus"/></svg></button>
                <button disabled aria-label="颜色"><svg><use href="#wheel"/></svg></button>
                <button disabled aria-label="用户详情"><svg><use href="#userlist"/></svg></button>
            </div>
            <h3><i class="td"></i>消息</h3>
            <div class="msgtools">
                <button disabled aria-label="收件箱"><svg><use href="#mail"/></svg></button>
                <button disabled aria-label="发件箱"><svg><use href="#mailup"/></svg></button>
                <button disabled aria-label="草稿"><svg><use href="#mailedit"/></svg></button>
            </div>
            <div class="list messages">
                <table><thead><tr><th class="c2"></th><th>从</th><th class="c3">当...时<i class="td"></i></th></tr></thead></table>
                <div class="scroll"><i class="tu"></i><i class="td"></i></div>
            </div>
            <div class="footer">
                <button disabled aria-label="新建消息"><svg><use href="#mailplus"/></svg></button>
                <button disabled aria-label="打开消息"><svg><use href="#mailopen"/></svg></button>
                <button disabled aria-label="完成消息"><svg><use href="#mailok"/></svg></button>
            </div>
        </aside>

        <section class="center">
            <div class="tabs">
                <button class="tiles" aria-label="标签概览"><svg><use href="#tiles"/></svg></button>
                <button class="tab"><svg><use href="#story"/></svg>[2. 楼层]</button>
                <button class="tab"><svg><use href="#sec"/></svg>[S-01 施工单位]</button>
                <button class="tab current"><svg><use href="#persp"/></svg>[3D / 选择, 楼层 2]<span class="x">×</span></button>
                <button class="tab"><svg><use href="#elevation"/></svg>[南向立面图]</button>
                <button class="navpop" aria-label="弹出式导航器"><svg class="w20"><use href="#navtree"/></svg><i class="td"></i></button>
            </div>
            <div class="viewport">
                <svg class="model" viewBox="143 125 751 522" preserveAspectRatio="xMidYMid slice">
                    <polygon class="face-top" points="272,240 621,212 864,290 252,398"/>
                    <polygon class="face-side" points="252,398 864,290 852,321 265,441"/>
                    <g id="hatching"></g>
                    <path class="hidden-edge" d="M265 441L278 265 619 232 852 321M272 240l6 25M621 212l-2 20"/>
                    <path class="edge-bottom" d="M252 398l13 43 587-120 12-31"/>
                    <path class="edge-top" d="M272 240L621 212 864 290"/>
                    <path class="edge-top front" d="M272 240L252 398 864 290"/>
                    <g class="node">
                        <circle cx="272" cy="240" r="2.2"/><circle cx="621" cy="212" r="2.2"/><circle cx="864" cy="290" r="2.2"/>
                        <circle cx="252" cy="398" r="2.2"/><circle cx="265" cy="441" r="2.2"/><circle cx="852" cy="321" r="2.2"/>
                    </g>
                    <g class="node back"><circle cx="278" cy="265" r="2"/><circle cx="619" cy="232" r="2"/></g>
                </svg>
                <i class="handle top"></i><i class="handle bottom"></i><i class="handle left"></i><i class="handle right"></i>
            </div>
            <div class="quickbar">
                <button class="tool" aria-label="上一缩放"><svg><use href="#zback"/></svg></button>
                <button class="tool dim" aria-label="下一缩放"><svg><use href="#zfwd"/></svg></button>
                <button class="tool" aria-label="放大"><svg><use href="#zin"/></svg></button>
                <i class="sep"></i>
                <button class="tool" aria-label="环绕"><svg><use href="#zorb"/></svg></button>
                <button class="tool slim" aria-label="漫游"><svg><use href="#walk"/></svg></button>
                <button class="option dim"><svg><use href="#zfit"/></svg><span>无</span><i class="tr"></i></button>
                <button class="option dim"><svg><use href="#pan"/></svg><span>无</span><i class="tr"></i></button>
                <button class="option"><svg><use href="#scale"/></svg><span>1:100</span><i class="tr"></i></button>
                <button class="option"><svg><use href="#laycomb"/></svg><span>02 绘图</span><i class="tr"></i></button>
                <button class="option"><svg><use href="#modelfilter"/></svg><span>整个模型</span><i class="tr"></i></button>
                <button class="option"><svg><use href="#pen"/></svg><span>03 建筑 100</span><i class="tr"></i></button>
                <button class="option"><svg><use href="#frame"/></svg><span>03 建筑设计</span><i class="tr"></i></button>
                <button class="option"><svg><use href="#override"/></svg><span>没有覆盖</span><i class="tr"></i></button>
            </div>
        </section>

        <aside class="navigator">
            <i class="grip"></i>
            <div class="trace">
                <div class="ref"><button class="sq" disabled aria-label="描绘参照"><svg><use href="#layers"/></svg></button><button class="choose" disabled><svg><use href="#ontop"/></svg><span>在当前楼层下</span><i class="tr"></i></button></div>
                <div class="icons one">
                    <button disabled aria-label="交换"><svg><use href="#swap"/></svg></button>
                    <button disabled aria-label="移动参照"><svg><use href="#moveref"/></svg></button>
                    <button disabled aria-label="旋转参照"><svg><use href="#rotref"/></svg></button>
                    <button disabled aria-label="重置参照"><svg><use href="#refset"/></svg></button>
                    <button disabled aria-label="重建参照"><svg><use href="#refresh"/></svg></button>
                </div>
                <hr>
                <label for="refop">参照 :</label>
                <div class="slide"><button disabled aria-label="参照颜色"><i class="swatch"></i><i class="tr"></i></button><span class="track"><input id="refop" type="range" value="100" disabled><i class="ticks"></i></span><button class="edge" disabled aria-label="参照选项"><i class="tr"></i></button></div>
                <label for="actop">活动 :</label>
                <div class="slide"><button disabled aria-label="活动颜色"><svg><use href="#rgb"/></svg><i class="tr"></i></button><span class="track"><input id="actop" type="range" value="100" disabled><i class="ticks"></i></span></div>
                <hr>
                <div class="icons two">
                    <button disabled aria-label="拖动"><svg><use href="#hand"/></svg></button>
                    <button disabled aria-label="重叠"><svg><use href="#overlap"/></svg></button>
                    <button disabled aria-label="拆分"><svg><use href="#splitref"/></svg></button>
                    <button disabled aria-label="遮罩"><svg><use href="#maskref"/></svg></button>
                </div>
            </div>
            <i class="grip"></i>
            <div class="maps">
                <button class="raised" aria-label="项目选择器"><svg><use href="#chooser"/></svg><i class="tr"></i></button>
                <button class="map on" aria-label="项目树状图"><svg><use href="#project"/></svg></button>
                <button class="map" aria-label="视图映射"><svg><use href="#story"/></svg></button>
                <button class="map" aria-label="图册"><svg><use href="#viewmap"/></svg></button>
                <button class="map" aria-label="发布器"><svg><use href="#layout"/></svg></button>
            </div>
            <div class="treebox">
                <ul class="tree">
                    <li class="open"><svg><use href="#project"/></svg>无标题</li>
                    <li class="l1 open"><svg><use href="#story"/></svg>楼层</li>
                    <li class="l2"><svg><use href="#story"/></svg>3. 楼层</li>
                    <li class="l2"><svg><use href="#story"/></svg>2. 楼层</li>
                    <li class="l2"><svg><use href="#story"/></svg>1. 首层</li>
                    <li class="l1 open"><svg><use href="#sec"/></svg>剖面图</li>
                    <li class="l2"><svg><use href="#sec"/></svg>S-01 施工单位 (自动重建模型)</li>
                    <li class="l1 open"><svg><use href="#elevation"/></svg>立面图</li>
                    <li class="l2"><svg><use href="#elevation"/></svg>北向立面图 (自动重建模型)</li>
                    <li class="l2"><svg><use href="#elevation"/></svg>东向立面图 (自动重建模型)</li>
                    <li class="l2"><svg><use href="#elevation"/></svg>南向立面图 (自动重建模型)</li>
                    <li class="l2"><svg><use href="#elevation"/></svg>西向立面图 (自动重建模型)</li>
                    <li class="l1"><svg><use href="#interior"/></svg>室内立面图</li>
                    <li class="l1"><svg><use href="#worksheet"/></svg>工作图</li>
                    <li class="l1"><svg><use href="#detail"/></svg>详图</li>
                    <li class="l1"><svg><use href="#doc3d"/></svg>3D文档</li>
                    <li class="l1 open"><svg><use href="#persp"/></svg>3D</li>
                    <li class="l2 selected"><svg><use href="#persp"/></svg>普通透视图</li>
                    <li class="l2"><svg><use href="#axo"/></svg>普通轴测图</li>
                    <li class="l1 open"><svg><use href="#grid"/></svg>清单</li>
                    <li class="l2 open"><svg><use href="#element"/></svg>元素</li>
                    <li class="l3"><svg><use href="#grid"/></svg>IES-01 墙壁一览表</li>
                </ul>
                <div class="scroll"><i class="tu"></i><i class="thumb"></i><i class="td"></i></div>
            </div>
            <div class="viewtools">
                <button aria-label="视图设置"><svg><use href="#viewset"/></svg></button>
                <button class="dim" aria-label="新建视图"><svg><use href="#viewnew"/></svg></button>
                <button class="dim" aria-label="删除"><svg><use href="#delete"/></svg></button>
            </div>
            <h3><i class="td"></i>属性</h3>
            <div class="prop"><svg><use href="#persp"/></svg><span>普通透视图</span></div>
            <button class="raised setup">设置...</button>
        </aside>
    </main>

    <footer class="bottombar"><svg><use href="#windows"/></svg><span>GRAPHISOFT ID</span></footer>
</div>
<script src="model.js"></script>
</body>
</html>
```
FILE: styles.css
```css
* {
    box-sizing: border-box;
}
body {
    margin: 0;
    font: 8px/12px "Open Sans", "Noto Sans CJK SC", sans-serif;
    color: #1c1c1c;
    background: #f0f0f0;
    overflow: hidden;
}
button, input, select {
    font: inherit;
    color: inherit;
    margin: 0;
    padding: 0;
    border: 0;
    border-radius: 0;
    background: none;
}
h1, h2, h3, p, ul {
    margin: 0;
    padding: 0;
    font-size: 8px;
    font-weight: normal;
}
a {
    color: inherit;
    text-decoration: none;
}
svg {
    display: block;
    flex: none;
    width: 13px;
    height: 13px;
    fill: none;
    stroke: #3f4c54;
    stroke-width: 1;
}
.sprite {
    position: absolute;
    width: 0;
    height: 0;
}
.w18 { width: 16px; height: 16px; }
.w20 { width: 18px; height: 14px; }
.w24 { width: 24px; height: 20px; }
.b { stroke: #3d86ea; }
.bf { fill: #2d6fd0; stroke: none; }
.bl { fill: #cfe2fb; stroke: none; }
.o { stroke: #e08a3c; }
.g { stroke: #53b365; }
.r { stroke: #ee6a50; }
.f { fill: #3f4c54; }
.w { fill: #fff; }
.gr { fill: #9c9c94; }
.dim { opacity: 0.45; }

/* small triangles */
.tr, .td, .tu, .drop::after, .more::after, .combo::after {
    content: "";
    flex: none;
    width: 0;
    height: 0;
    border: 3px solid transparent;
}
.tr { border-width: 2px 0 2px 3px; border-left-color: #222; }
.td, .drop::after, .more::after, .combo::after { border-width: 3px 3px 0 3px; border-top-color: #333; }
.tu { border-width: 0 3px 3px 3px; border-bottom-color: #777; }

.app {
    display: flex;
    flex-direction: column;
    height: 100vh;
}

/* title and menu */
.titlebar {
    flex: 0 0 13px;
    display: flex;
    align-items: center;
    background: linear-gradient(90deg, #c9d1d5 0, #a3b3bc 8%, #5d798b 13%, #54758a 50%, #5f7c90 75%, #48647a 100%);
}
.logo { width: 8px; height: 11px; }
.titlebar h1 { margin-left: 3px; color: #111; line-height: 10px; }
.wincontrols {
    display: flex;
    align-self: flex-start;
    margin-left: auto;
}
.wincontrols button {
    width: 18px;
    height: 10px;
    border: 1px solid #36495a;
    border-top: 0;
    background: linear-gradient(#8fa1af, #5c7284);
    display: flex;
    justify-content: center;
    align-items: center;
}
.wincontrols .close { width: 31px; background: linear-gradient(#d98a78, #c23d22); }
.wi { width: 10px; height: 8px; stroke: #fff; }
.mdi .wi { stroke: #333; }
.menubar {
    flex: 0 0 13px;
    display: flex;
    align-items: center;
    gap: 9px;
    padding-left: 1px;
    background: linear-gradient(#f7f9fc, #d5dcee);
}
.mdi { margin-left: auto; display: flex; }

/* toolbars */
.toolbar {
    flex: 0 0 23px;
    display: flex;
    align-items: center;
    padding-left: 1px;
}
.view3d { flex-basis: 22px; padding-left: 89px; }
.tool {
    flex: 0 0 16px;
    height: 18px;
    display: flex;
    align-items: center;
    justify-content: center;
}
.tool.wide { flex-basis: 19px; }
.tool.slim { flex-basis: 12px; }
.drop {
    flex: 0 0 13px;
    height: 18px;
    display: flex;
    align-items: center;
    justify-content: center;
}
.drop::after { border-width: 3px 2px 0 2px; }
.on {
    border: 1px solid #858585;
    border-radius: 2px;
    background: #dcdcdc;
    box-shadow: inset 0 1px 2px #aaa;
}
.split { flex: 0 0 31px; height: 19px; display: flex; align-items: center; }
.split .tool { flex: 1; border-right: 1px solid #999; }
.split .drop { flex-basis: 10px; }
.sep { flex: 0 0 1px; height: 18px; margin: 0 2px; background: #b4b4b4; }
.sep.wide { margin: 0 3px; }
.sep.loose { height: 10px; margin: 0 5px 0 6px; }
.sep.tall { height: 20px; margin: 0 1px 0 1px; }
.settings { flex: 0 0 220px; display: flex; justify-content: space-between; }
.layerset { flex: 0 0 59px; line-height: 9px; }
.layerset div { display: flex; gap: 9px; padding-left: 4px; }
.mini svg { width: 10px; height: 9px; }
.history { padding-left: 5px; display: flex; flex-direction: column; gap: 1px; }
.window3d {
    flex: 0 0 48px;
    height: 19px;
    display: flex;
    align-items: center;
    gap: 2px;
    padding-left: 2px;
}

/* info box */
.infobox {
    flex: 0 0 39px;
    display: flex;
    border-top: 1px solid #d4d4d4;
    border-bottom: 1px solid #d4d4d4;
    overflow: hidden;
}
.cell {
    flex: 0 0 119px;
    display: flex;
    flex-direction: column;
    padding: 1px 2px 0 3px;
    border-right: 1px solid #b4b4b4;
    white-space: nowrap;
}
.cell:last-child { flex: 1 0 4px; padding: 0; border: 0; }
.cell h2 { font-size: 6px; line-height: 10px; }
.row { display: flex; flex: 1; align-items: center; gap: 1px; }
.cell .row { padding-bottom: 1px; }
.raised {
    border: 1px solid #9a9a9a;
    border-radius: 1px;
    background: linear-gradient(#fafafa, #d8d8d8);
    display: flex;
    align-items: center;
    justify-content: space-between;
    padding: 0 3px 0 4px;
    gap: 2px;
    height: 12px;
}
.raised svg { width: 13px; height: 11px; }
.big { height: 18px; }
.big svg { height: 13px; }
.big .w20 { width: 18px; }
.grow { flex: 1; }
.grow span { margin-right: auto; }
.cell .main-row { align-items: flex-end; padding-bottom: 4px; margin-top: -8px; }
.main-row .raised { flex: 1; }
.main-row .big { flex: 0 0 31px; padding: 0 2px; }
.active { background: linear-gradient(#bfe3f7, #4ba3d6); border-color: #3a7ea8; justify-content: center; }
.methods button { flex: 1; height: 18px; display: flex; align-items: center; justify-content: center; }
.cell .home { font-size: 7px; line-height: 14px; }
.cell .story { display: flex; justify-content: flex-end; align-items: center; gap: 4px; line-height: 12px; }
.tiny {
    flex: 0 0 9px;
    height: 9px;
    border: 1px solid #9a9a9a;
    display: flex;
    align-items: center;
    justify-content: center;
}
.fields { flex: 1; display: flex; flex-direction: column; padding-left: 2px; }
.fields input {
    width: 100%;
    height: 13px;
    padding-left: 2px;
    border: 1px solid #ddd;
    background: #fff;
    font-size: 7px;
}
.fields + .tiny { margin-left: 3px; }
.combo { position: relative; flex: 1; display: flex; }
.combo select {
    appearance: none;
    width: 100%;
    height: 14px;
    padding-left: 4px;
    border: 1px solid #d0d0d0;
    background: #fff;
    opacity: 1;
}
.combo::after { position: absolute; right: 4px; top: 6px; }

/* main area */
.workspace { flex: 1; display: flex; min-height: 0; border-bottom: 1px solid #a9adaf; }
.grip { display: block; flex: 0 0 1px; width: 44px; margin: 3px auto 3px; background: #8a8a8a; }
h3 {
    flex: 0 0 12px;
    line-height: 12px;
    background: #d5d5d5;
    display: flex;
    align-items: center;
    white-space: nowrap;
}
.toolbox {
    flex: 0 0 27px;
    display: flex;
    flex-direction: column;
    overflow: hidden;
    border-right: 1px solid #e0e0e0;
}
.toolbox .grip { width: 12px; }
.toolbox button { display: flex; align-items: center; justify-content: center; padding-right: 2px; }
.toolbox .pointer { flex: 0 0 17px; }
.toolbox .marq { flex: 0 0 23px; }
.toolbox h3 { margin: 0 0 2px -1px; border-radius: 0 2px 2px 0; }
.toolbox .design { flex: 0 0 329px; display: flex; flex-direction: column; }
.design button { flex: 1; min-height: 0; }
.document { flex: 1; min-height: 0; overflow: hidden; color: #999; }
.document button { width: 100%; height: 19px; opacity: 0.55; }

.teamwork {
    flex: 0 0 116px;
    display: flex;
    flex-direction: column;
    border-right: 1px solid #d8dcde;
}
.teamwork h3 .td, .navigator h3 .td { margin: 0 6px 0 3px; border-left-width: 2px; border-right-width: 2px; }
.status { flex: 0 0 28px; display: flex; align-items: center; gap: 7px; padding: 8px 2px 0 1px; color: #777; }
.status svg { opacity: 0.35; }
.status .tiny { margin-left: auto; border-color: #bbb; }
.status .tr { border-left-color: #888; }
.action { flex: 0 0 16px; display: flex; align-items: center; margin: 2px 2px 1px 5px; color: #999; }
.action svg { width: 12px; height: 12px; margin-right: 4px; opacity: 0.45; }
.action button { height: 16px; flex: 1; border: 1px solid #b5b5b5; border-radius: 1px; }
.action .more { flex: 0 0 16px; border-left: 0; display: flex; align-items: center; justify-content: center; }
.more::after { border-left-width: 2px; border-right-width: 2px; border-top-color: #999; }
.teamwork h3 + .action { margin-top: 5px; }
.teamwork hr { width: 112px; }
hr { flex: none; height: 1px; margin: 3px auto; border: 0; background: #bdbdbd; }
.caption { padding: 5px 0 3px 1px; font-size: 7px; color: #777; }
.colors { flex-basis: 14px; margin-right: 1px; }
.colors select { border-color: #b5b5b5; background: linear-gradient(90deg, #f0f0f0 85%, #fff 85%); padding-left: 1px; color: #999; }
.colors .combo::after { border-top-color: #999; border-left-width: 2px; border-right-width: 2px; }
.mine { flex: 0 0 13px; margin: 4px 2px 5px; border: 1px solid #b5b5b5; color: #999; line-height: 11px; }
.list { display: grid; grid-template-columns: 1fr 10px; grid-template-rows: 14px 1fr; min-height: 0; }
.list table { width: 106px; border-collapse: collapse; table-layout: fixed; background: linear-gradient(#fff, #f3f5f7); height: 14px; }
.list th { padding: 0 1px; font-weight: normal; text-align: left; line-height: 11px; white-space: nowrap; border-right: 1px solid #e6e8ea; border-bottom: 1px solid #dcdcdc; }
.list th svg { width: 11px; height: 11px; margin-left: 1px; }
.c0 { width: 22px; }
.c1 { width: 16px; }
.c2 { width: 8px; }
.c3 { width: 37px; }
.c3 .td { display: inline-block; margin-left: 5px; vertical-align: middle; border-top-color: #999; }
.scroll { grid-column: 2; grid-row: 2; display: flex; flex-direction: column; align-items: center; justify-content: space-between; padding: 4px 0; border-left: 1px solid #e2e2e2; }
.list .scroll .td { border-top-color: #777; }
.list .scroll .tu, .list .scroll .td, .treebox .tu, .treebox .td { border-left-width: 2px; border-right-width: 2px; }
.users { flex: 0 0 136px; }
.messages { flex: 1; }
.footer { flex: 0 0 24px; display: flex; align-items: center; justify-content: flex-end; gap: 7px; padding-right: 5px; }
.footer.first { flex-basis: 26px; padding-bottom: 2px; }
.footer svg, .msgtools svg { width: 12px; height: 12px; opacity: 0.45; }
.boxed { margin-right: auto; margin-left: 2px; width: 18px; height: 18px; border: 1px solid #bbb; display: flex; align-items: center; justify-content: center; }
.msgtools { flex: 0 0 23px; display: flex; align-items: center; gap: 7px; padding: 3px 0 0 5px; }

/* view window */
.center { flex: 1; min-width: 0; display: flex; flex-direction: column; }
.tabs { flex: 0 0 15px; display: flex; background: #dadada; white-space: nowrap; }
.tabs svg { width: 12px; height: 12px; }
.tabs button { display: flex; align-items: center; }
.tabs .tiles { flex: 0 0 17px; justify-content: center; }
.tabs .tab { flex: 1; padding-left: 2px; border-right: 1px solid #cbcbcb; }
.tabs .current { background: #fff; }
.current .x { margin: 0 5px 0 auto; font-size: 10px; }
.tabs .navpop { flex: 0 0 33px; gap: 3px; padding-left: 4px; }
.tabs .navpop .w20 { width: 18px; height: 14px; }
.navpop .td { border-left-width: 2px; border-right-width: 2px; }
.viewport { flex: 1; position: relative; min-height: 0; background: #e5ebee; }
.model { width: 100%; height: 100%; }
.face-top { fill: #6c8c6f; stroke: none; }
.face-side { fill: #446345; stroke: none; }
.hidden-edge { stroke: #3fae3f; opacity: 0.45; }
.edge-bottom { stroke: #12b812; stroke-width: 1.4; }
.edge-top { stroke: #0a10ee; stroke-width: 1.6; }
.front { stroke-width: 2; }
.node { fill: #000; stroke: none; }
.back { fill: #3b5e3e; }
.hatch-line { stroke: #26402a; }
.hatch-dot { fill: #1d3320; stroke: none; opacity: 0.55; }
.hatch-band { fill: #55735a; stroke: none; opacity: 0.22; }
.handle { position: absolute; background: #dbe0e2; border-radius: 2px; }
.handle.top, .handle.bottom { left: 50%; width: 21px; height: 10px; margin-left: -11px; }
.handle.top { top: 1px; }
.handle.bottom { bottom: 0; }
.handle.left, .handle.right { top: 50%; width: 11px; height: 20px; margin-top: -10px; }
.handle.left { left: 0; }
.handle.right { right: 0; }
.handle::after { content: ""; position: absolute; }
.handle.top::after, .handle.bottom::after { left: 2px; right: 2px; top: 4px; border-top: 1px dashed #f0a050; }
.handle.left::after, .handle.right::after { left: 5px; top: 2px; bottom: 2px; border-left: 1px dashed #f0a050; }
.quickbar { flex: 0 0 12px; display: flex; align-items: center; background: #eef0f0; }
.quickbar .tool { height: 12px; }
.quickbar .sep { height: 12px; margin: 0; }
.quickbar svg { width: 11px; height: 11px; }
.quickbar .slim svg { width: 9px; height: 9px; }
.option {
    flex: 0 0 77px;
    height: 12px;
    display: flex;
    align-items: center;
    padding: 0 4px 0 4px;
    border-left: 1px solid #b4b4b4;
    white-space: nowrap;
}
.option.dim { opacity: 1; color: #999; }
.option.dim .tr { border-left-color: #999; }
.option.dim + .option.dim svg { opacity: 0.4; }
.option span { flex: 1; text-align: center; }

/* right side */
.navigator { flex: 0 0 181px; display: flex; flex-direction: column; border-left: 1px solid #d8dcde; padding-left: 1px; }
.navigator > .grip { margin-bottom: 4px; }
.trace { flex: 0 0 131px; display: flex; flex-direction: column; border-bottom: 1px solid #d0d0d0; color: #777; }
.trace button { opacity: 0.9; border: 1px solid #bcbcbc; display: flex; align-items: center; }
.trace svg { opacity: 0.5; width: 12px; height: 12px; }
.trace .tr { border-left-color: #888; }
.trace hr { width: 100%; margin: 1px 0; }
.ref { flex: 0 0 18px; display: flex; gap: 1px; }
.ref .sq { flex: 0 0 19px; justify-content: center; }
.ref .choose { flex: 1; padding: 0 3px 0 1px; gap: 1px; }
.choose span { margin-right: auto; }
.icons { display: flex; flex: 0 0 21px; align-items: center; gap: 7px; }
.icons button { border: 0; }
.one { padding-left: 3px; }
.one button:first-child { margin-right: 20px; }
.two { padding-left: 23px; }
.trace label { line-height: 14px; font-size: 7px; }
.slide { flex: 0 0 18px; display: flex; padding-left: 19px; }
.slide button { flex: 0 0 19px; justify-content: space-between; padding: 0 3px 0 2px; }
.slide svg { width: 9px; height: 9px; opacity: 1; }
.swatch { width: 8px; height: 8px; background: #e2e0c4; }
.track { flex: 0 1 112px; display: flex; flex-direction: column; margin: 0 auto 0 5px; }
.track input { appearance: none; width: 100%; height: 11px; }
.track input::-webkit-slider-runnable-track { height: 2px; background: #c8c8c8; }
.track input::-webkit-slider-thumb { appearance: none; width: 4px; height: 8px; margin-top: -3px; border: 1px solid #b5b5b5; border-radius: 2px; background: #f0f0f0; }
.ticks {
    height: 2px;
    margin: 1px 2px 0 2px;
    border-right: 1px solid #bbb;
    background: linear-gradient(90deg, #bbb 1px, transparent 1px) 0 0 / 10% 100%;
}
.slide .edge { flex: 0 0 9px; }
.maps { flex: 0 0 20px; display: flex; align-items: center; gap: 1px; padding-bottom: 2px; }
.maps .raised { height: 18px; width: 28px; margin: 0 auto 0 -1px; }
.map { width: 18px; height: 18px; display: flex; align-items: center; justify-content: center; }
.treebox { flex: 1; min-height: 0; display: grid; grid-template-columns: 1fr 9px; background: #fff; }
.tree { list-style: none; display: flex; flex-direction: column; min-height: 0; overflow: hidden; }
.tree li { flex: 1; min-height: 0; display: flex; align-items: center; gap: 3px; padding-left: 12px; white-space: nowrap; }
.tree .l1 { padding-left: 18px; }
.tree .l2 { padding-left: 24px; }
.tree .l3 { padding-left: 31px; }
.tree svg { width: 12px; height: 12px; }
.open::before { content: ""; width: 0; height: 0; margin: 2px 0 0 -7px; border-left: 4px solid transparent; border-bottom: 4px solid #333; }
.selected { font-weight: 600; background: #eeeeef; border: 1px solid #e0e0e0; border-width: 1px 0; }
.treebox .scroll { grid-row: 1; background: #f0f0f0; }
.thumb { flex: none; height: 53%; width: 8px; border: 1px solid #aaa; background: linear-gradient(90deg, #f6f6f6, #d2d2d2); margin: 4px 0 auto; }
.viewtools { flex: 0 0 25px; display: flex; align-items: center; justify-content: flex-end; gap: 7px; padding-right: 2px; }
.viewtools svg { width: 12px; height: 12px; }
.viewtools .dim { opacity: 0.55; }
.prop { flex: 0 0 16px; display: flex; align-items: center; padding-left: 1px; }
.prop svg { width: 8px; height: 9px; }
.prop span { margin-left: 45px; }
.setup { flex: 0 0 14px; justify-content: center; margin: 0 0 5px -1px; }

.bottombar {
    flex: 0 0 11px;
    display: flex;
    align-items: center;
    justify-content: flex-end;
    gap: 13px;
    padding-right: 24px;
    background: #f1eeed;
    font: 8px/11px Lato, sans-serif;
    color: #9b9b9b;
}
.bottombar span { font-size: 9px; }
.bottombar svg { width: 11px; height: 10px; }
```
FILE: model.js
```js
// surface hatching of the mesh, laid out in perspective on its two visible faces
const SVG = 'http://www.w3.org/2000/svg';
const layer = document.getElementById('hatching');

// maps the unit square onto a quad given as p00, p10, p11, p01
function perspective(p0, p1, p2, p3) {
    const dx1 = p1[0] - p2[0], dx2 = p3[0] - p2[0], dx3 = p0[0] - p1[0] + p2[0] - p3[0];
    const dy1 = p1[1] - p2[1], dy2 = p3[1] - p2[1], dy3 = p0[1] - p1[1] + p2[1] - p3[1];
    const det = dx1 * dy2 - dx2 * dy1;
    const g = (dx3 * dy2 - dx2 * dy3) / det;
    const h = (dx1 * dy3 - dx3 * dy1) / det;
    return (u, v) => {
        const w = g * u + h * v + 1;
        return [
            ((p1[0] - p0[0] + g * p1[0]) * u + (p3[0] - p0[0] + h * p3[0]) * v + p0[0]) / w,
            ((p1[1] - p0[1] + g * p1[1]) * u + (p3[1] - p0[1] + h * p3[1]) * v + p0[1]) / w
        ];
    };
}

function add(tag, attrs) {
    const el = document.createElementNS(SVG, tag);
    for (const key in attrs) el.setAttribute(key, attrs[key]);
    layer.appendChild(el);
}

function line(a, b, opacity) {
    add('path', { class: 'hatch-line', d: `M${a}L${b}`, opacity: opacity });
}

function dot(p, r) {
    add('circle', { class: 'hatch-dot', cx: p[0], cy: p[1], r: r });
}

const ground = perspective([252, 398], [864, 290], [621, 212], [272, 240]);
const side = perspective([252, 398], [864, 290], [852, 321], [265, 441]);

const rows = 20;
for (let i = 0; i < rows; i++) {
    const v = i / rows, v2 = (i + 0.45) / rows;
    add('polygon', { class: 'hatch-band', points: [ground(0, v), ground(1, v), ground(1, v2), ground(0, v2)].join(' ') });
}
for (let i = 1; i < 20; i++) {
    line(ground(i / 20, 0), ground(i / 20, 1), 0.06);
}
for (let i = 0; i < 30; i++) {
    for (let j = 0; j < 8; j++) {
        dot(ground((i + 0.5) / 30, (j + 0.5) / 28), 0.4);
    }
}

for (let i = 1; i < 30; i++) {
    line(side(i / 30, 0), side(i / 30, 1), i % 2 ? 0.22 : 0.4);
}
line(side(0, 0.82), side(1, 0.82), 0.3);
for (let i = 0; i < 60; i++) {
    for (const v of [0.25, 0.6, 0.93]) dot(side((i + 0.5) / 60, v), 0.7);
}
```
